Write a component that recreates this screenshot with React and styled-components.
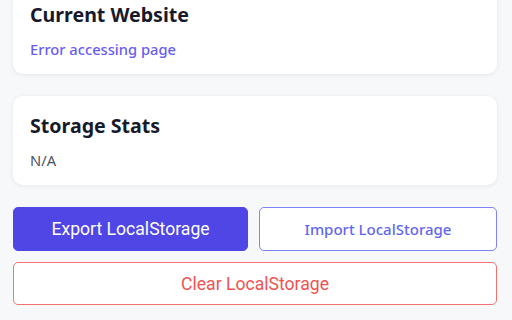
import React from "react";
import styled, { createGlobalStyle } from "styled-components";

const Global = createGlobalStyle`
  html, body { margin: 0; padding: 0; background: #f7f8fa; overflow: hidden; }
  body { font-family: "Noto Sans", sans-serif; }
`;

const Page = styled.div`
  display: flex;
  flex-direction: column;
  gap: 22px;
  padding: 0 15px 0 13px;
  margin-top: -15px;
`;

const Card = styled.section`
  background: #ffffff;
  border-radius: 10px;
  box-shadow: 0 1px 5px rgba(15, 23, 42, 0.08);
  padding: 16px 17px 14px;
  display: flex;
  flex-direction: column;
  gap: 10px;
`;

const Title = styled.h2`
  margin: 0;
  font-family: "Noto Sans", sans-serif;
  font-size: 19.6px;
  font-weight: 700;
  line-height: 28px;
  color: #161a2b;
`;

const Value = styled.div`
  font-size: 14.7px;
  line-height: 21px;
  color: ${(p) => (p.$accent ? "#6a5cf0" : "#4b5563")};
  font-weight: ${(p) => (p.$accent ? 500 : 400)};
`;

const Actions = styled.div`
  display: flex;
  flex-direction: column;
  gap: 11px;
`;

const Row = styled.div`
  display: grid;
  grid-template-columns: 235fr 238fr;
  gap: 11px;
`;

const Button = styled.button`
  height: 44px;
  border-radius: 5px;
  font-size: 17.6px;
  cursor: pointer;
  ${(p) =>
    p.$variant === "primary"
      ? `background:#4f46e5;color:#fff;border:1px solid #4f46e5;font-family:Roboto,sans-serif;`
      : p.$variant === "danger"
      ? `background:#fff;color:#f05252;border:1px solid #f87171;font-family:Roboto,sans-serif;height:43px;`
      : `background:#fff;color:#6366f1;border:1px solid #8083f5;font-family:"Noto Sans",sans-serif;font-weight:500;font-size:15px;`}
`;

export default function App() {
  return (
    <>
      <Global />
      <Page>
        <Card>
          <Title>Current Website</Title>
          <Value $accent>Error accessing page</Value>
        </Card>
        <Card>
          <Title>Storage Stats</Title>
          <Value>N/A</Value>
        </Card>
        <Actions>
          <Row>
            <Button $variant="primary">Export LocalStorage</Button>
            <Button $variant="outline">Import LocalStorage</Button>
          </Row>
          <Button $variant="danger">Clear LocalStorage</Button>
        </Actions>
      </Page>
    </>
  );
}
